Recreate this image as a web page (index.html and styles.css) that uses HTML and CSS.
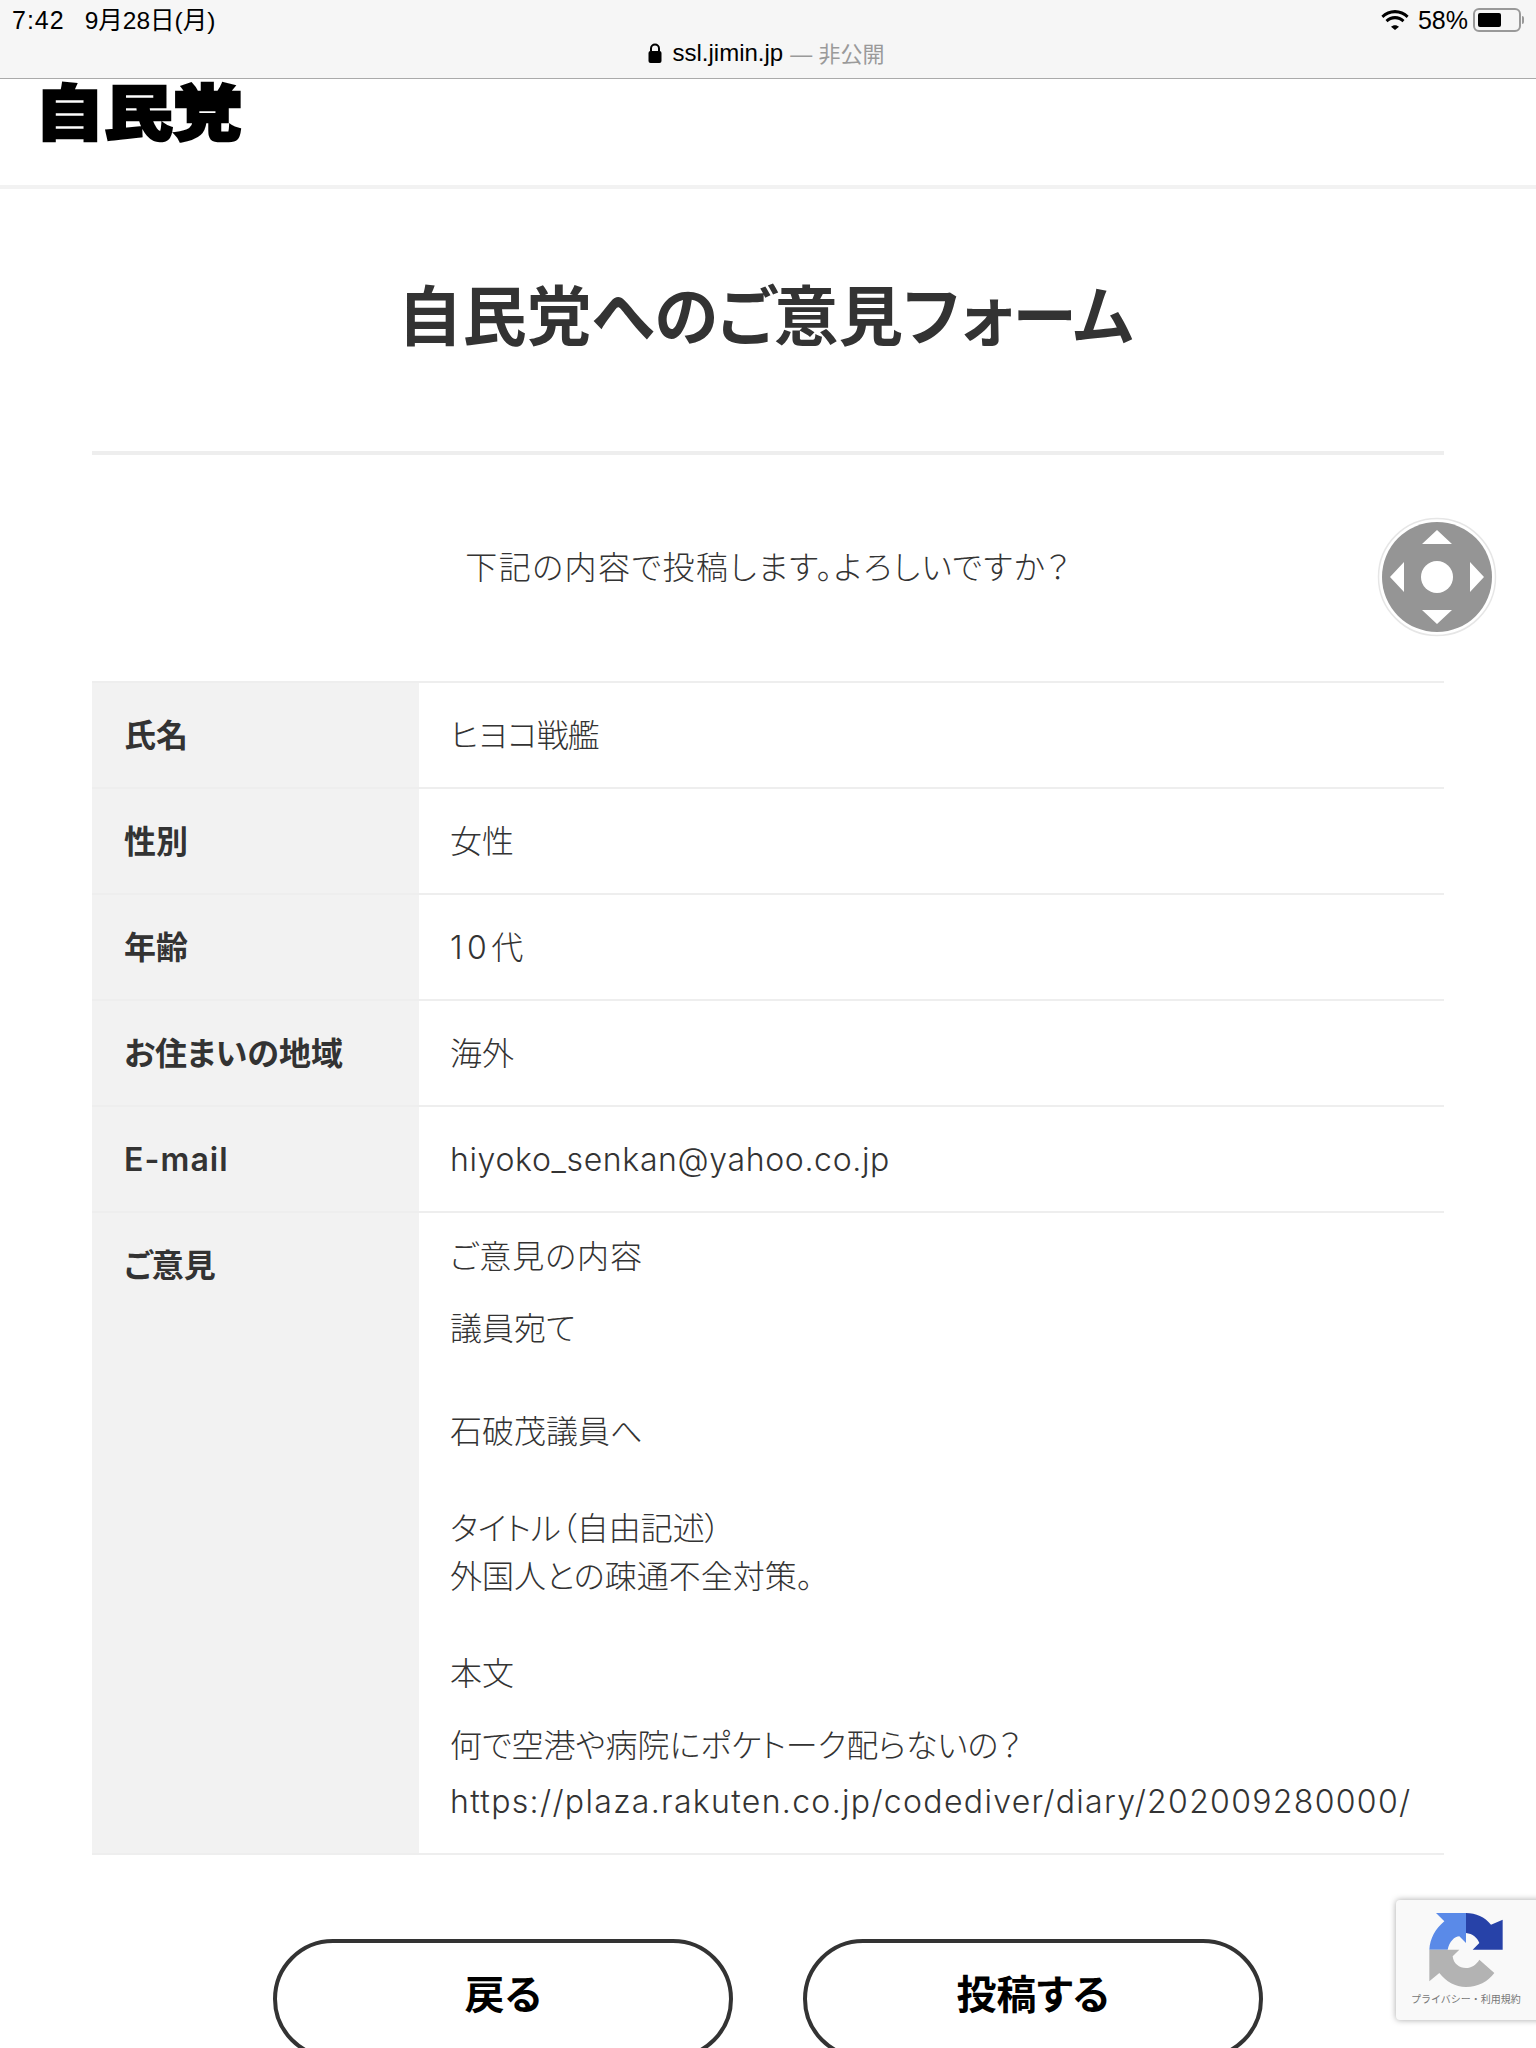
FILE: index.html
```html
<!DOCTYPE html>
<html lang="ja">
<head>
<meta charset="utf-8">
<title>自民党へのご意見フォーム</title>
<link rel="stylesheet" href="styles.css">
</head>
<body>
<div class="status">
  <div class="status-row">
    <span class="clock">7:42</span><span class="date">9月28日(月)</span>
    <span class="status-right">
      <svg class="wifi" viewBox="0 0 28 20" width="28" height="20"><path d="M14 3.2c4.6 0 8.7 1.8 11.7 4.7l1.9-2.2C24 2.2 19.2 0 14 0S4 2.2.4 5.7l1.9 2.2C5.3 5 9.4 3.200 14 3.200zM14 9.300c2.900 0 5.500 1.100 7.500 2.900l2-2.200C20.800 7.500 17.500 6 14 6s-6.800 1.500-9.500 4l2 2.200c2-1.800 4.600-2.900 7.500-2.900zM14 15.300c-1.500 0-2.900.6-4 1.500l4 3.200 4-3.200c-1.100-.9-2.500-1.500-4-1.500z" fill="#000"/></svg>
      <span class="pct">58%</span>
      <span class="battery"><span class="battery-fill"></span></span><span class="battery-tip"></span>
    </span>
  </div>
  <div class="address">
    <svg class="lock" viewBox="0 0 14 20" width="14" height="20"><path d="M3 8V5.500a4 4 0 0 1 8 0V8" fill="none" stroke="#000" stroke-width="2"/><rect x="0.500" y="8" width="13" height="12" rx="2" fill="#000"/></svg>
    <span class="host">ssl.jimin.jp</span><span class="private"> — 非公開</span>
  </div>
</div>

<header class="site-header"><div class="logo">自民党</div></header>

<main class="content">
  <h1 class="title">自民党へのご意見フォーム</h1>
  <p class="lead">下記の内容で投稿します。よろしいですか？</p>
  <table class="confirm">
    <tr><th>氏名</th><td class="tight">ヒヨコ戦艦</td></tr>
    <tr><th>性別</th><td>女性</td></tr>
    <tr><th>年齢</th><td class="wide-digits">10代</td></tr>
    <tr><th>お住まいの地域</th><td>海外</td></tr>
    <tr><th class="latin-head">E-mail</th><td class="latin">hiyoko_senkan@yahoo.co.jp</td></tr>
    <tr class="opinion">
      <th>ご意見</th>
      <td>
        <p class="first">ご意見の内容</p>
        <p>議員宛て</p>
        <p class="gap-wide">石破茂議員へ</p>
        <p class="gap-blank">タイトル（自由記述）<br>外国人との疎通不全対策。</p>
        <p class="gap-blank">本文</p>
        <p class="before-url">何で空港や病院にポケトーク配らないの？</p>
        <p class="url">https://plaza.rakuten.co.jp/codediver/diary/202009280000/</p>
      </td>
    </tr>
  </table>
  <div class="actions">
    <button class="btn" type="button">戻る</button>
    <button class="btn" type="button">投稿する</button>
  </div>
</main>

<svg class="dpad" viewBox="0 0 120 120" width="120" height="120">
  <circle cx="60" cy="60" r="58.500" fill="#fff" stroke="#e6e6e6" stroke-width="1.500"/>
  <circle cx="60" cy="60" r="55" fill="#959595"/>
  <circle cx="60" cy="60" r="16" fill="#fff"/>
  <path d="M60 13L75 27H45zM60 107L45 93H75zM13 60L27 45V75zM107 60L93 75V45z" fill="#fff"/>
</svg>

<aside class="recaptcha">
  <svg class="rc-logo" viewBox="160 100 220 222" width="74" height="74">
    <path d="M180 100H270V190L250 170C236 170 220 186 215 210H160C162 176 178 148 205 125z" fill="#5a8ae8"/>
    <path d="M270 100C300 100 326 112 345 135L380 120V210H290L310 190C304 174 290 162 270 160z" fill="#2742a8"/>
    <path d="M160 210H250L230 230C232 252 250 265 270 265C286 265 300 256 310 240L355 280C336 306 306 322 270 322C238 322 210 306 190 280L160 305z" fill="#b3b3b3"/>
  </svg>
  <div class="rc-text">プライバシー・利用規約</div>
</aside>
</body>
</html>
```
FILE: styles.css
```css
* { box-sizing: border-box; }
html, body { margin: 0; padding: 0; }
body {
  position: relative;
  width: 1536px;
  height: 2048px;
  overflow: hidden;
  background: #fff;
  color: #333;
  font-family: "Inter", "Noto Sans CJK JP", sans-serif;
  font-size: 32px;
  font-feature-settings: "palt";
}
.status {
  height: 79px;
  background: #f6f6f6;
  border-bottom: 1px solid #aaa;
  color: #000;
  font-family: "Liberation Sans", "Noto Sans CJK JP", sans-serif;
  font-size: 25px;
}
.status-row {
  display: flex;
  align-items: center;
  height: 40px;
  padding: 0 12px;
}
.clock { margin-right: 20px; letter-spacing: 1px; }
.date { margin-bottom: 4px; font-size: 24.5px; }
.status-right { display: flex; align-items: center; margin-left: auto; }
.wifi { margin-right: 9px; }
.pct { margin-right: 5px; }
.battery {
  display: block;
  width: 48px;
  height: 24px;
  padding: 3px;
  border: 2px solid #999;
  border-radius: 6px;
}
.battery-fill { display: block; width: 23px; height: 14px; background: #000; border-radius: 2px; }
.battery-tip { width: 2px; height: 8px; background: #999; margin-left: 1px; border-radius: 0 2px 2px 0; }
.address {
  display: flex;
  justify-content: center;
  align-items: center;
  height: 26px;
  padding-right: 4px;
  font-size: 24px;
}
.lock { margin-right: 11px; }
.private { color: #9a9a9a; margin-left: 1px; margin-bottom: 2px; white-space: pre; font-size: 22px; }

.site-header {
  height: 110px;
  padding-left: 35px;
  border-bottom: 4px solid #f2f2f2;
}
.logo {
  font-family: "Noto Sans CJK JP", sans-serif;
  font-weight: 900;
  font-size: 69px;
  line-height: 61px;
  color: #000;
  -webkit-text-stroke: 3px #000;
  font-feature-settings: normal;
  transform: scaleY(0.87);
}

.content { padding: 0 92px; }
.title {
  margin: 0;
  height: 266px;
  padding: 84px 5px 0 0;
  border-bottom: 4px solid #eee;
  text-align: center;
  font-family: "Noto Sans CJK JP", sans-serif;
  font-size: 64.5px;
  line-height: 78px;
  font-weight: 700;
}
.lead {
  margin: 0;
  height: 226px;
  padding-top: 86px;
  text-align: center;
  font-family: "Noto Sans CJK JP", sans-serif;
  font-weight: 300;
  line-height: 48px;
  letter-spacing: 1.5px;
}
.confirm {
  width: 100%;
  border-collapse: collapse;
  table-layout: fixed;
}
.confirm th, .confirm td {
  height: 106px;
  padding: 2px 32px 0;
  border-top: 2px solid #eee;
  border-bottom: 2px solid #eee;
  line-height: 48px;
  text-align: left;
  vertical-align: middle;
}
.confirm td { padding-left: 31px; font-weight: 300; }
.confirm th {
  width: 327px;
  background: #f2f2f2;
  font-weight: 600;
}
.confirm .tight { letter-spacing: -1px; }
.confirm .wide-digits { letter-spacing: 4.5px; }
.confirm .latin { letter-spacing: 0.65px; }
.confirm .latin-head { letter-spacing: 1.1px; }
.confirm .opinion th { vertical-align: top; padding-top: 29px; }
.confirm .opinion td { padding-top: 20px; padding-bottom: 27px; vertical-align: top; }
.opinion p { margin: 0 0 24px; }
.opinion .first { letter-spacing: 1px; }
.opinion .gap-wide { margin-top: 55px; }
.opinion .gap-blank { margin-top: 49px; }
.opinion .before-url { margin-bottom: 8px; }
.opinion .url { margin: 0; letter-spacing: 1.32px; }
.actions {
  display: flex;
  justify-content: center;
  gap: 70px;
  margin-top: 84px;
}
.btn {
  width: 460px;
  height: 120px;
  background: #fff;
  border: 4px solid #333;
  border-radius: 60px;
  font-family: "Noto Sans CJK JP", sans-serif;
  font-size: 40px;
  font-weight: 700;
  color: #000;
  padding: 0 0 14px;
  font-feature-settings: "palt";
}
.dpad { position: absolute; left: 1377px; top: 517px; }
.recaptcha {
  position: absolute;
  left: 1396px;
  top: 1900px;
  width: 160px;
  height: 120px;
  background: #f9f9f9;
  border-radius: 4px;
  box-shadow: 0 0 6px rgba(0,0,0,.35);
}
.rc-logo { display: block; position: absolute; left: 33px; top: 13px; }
.rc-text {
  position: absolute;
  left: 15px;
  top: 92px;
  font-family: "Noto Sans CJK JP", sans-serif;
  font-size: 10px;
  line-height: 14px;
  color: #777;
  white-space: nowrap;
  font-feature-settings: normal;
}
```
